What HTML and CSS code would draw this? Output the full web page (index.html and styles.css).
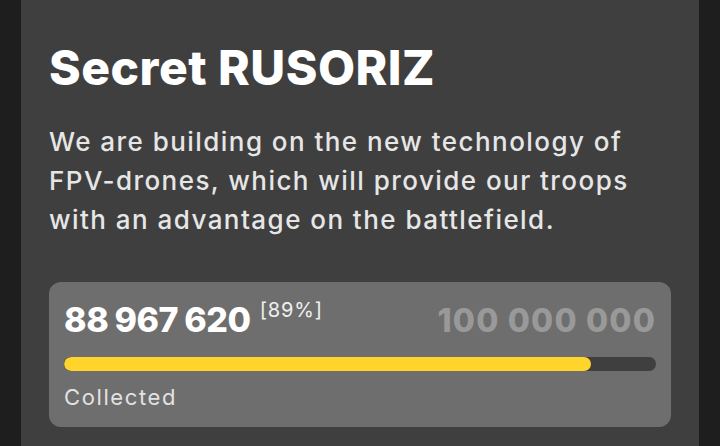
FILE: index.html
```html
<!DOCTYPE html>
<html lang="en">
<head>
<meta charset="utf-8">
<title>Secret RUSORIZ</title>
<link rel="stylesheet" href="styles.css">
</head>
<body>
<div class="page">
  <section class="panel">
    <h1 class="title">Secret RUSORIZ</h1>
    <p class="desc">We are building on the new technology of FPV-drones, which will provide our troops with an advantage on the battlefield.</p>
    <div class="card">
      <div class="row">
        <div class="collected">
          <span class="amount">88 967 620</span><span class="pct">[89%]</span>
        </div>
        <span class="goal">100 000 000</span>
      </div>
      <div class="track"><div class="fill" style="width: 89%"></div></div>
      <div class="label">Collected</div>
    </div>
  </section>
</div>
</body>
</html>
```

FILE: styles.css
```css
html, body {
  margin: 0;
  padding: 0;
  height: 100%;
}
body {
  background: #1e1e1e;
  font-family: Inter, "Noto Sans", "DejaVu Sans", sans-serif;
  overflow: hidden;
}
.page {
  padding: 0 21px;
  height: 100%;
}
.panel {
  background: #3f3f3f;
  height: 100%;
  box-sizing: border-box;
  padding: 39px 28px 0;
}
.title {
  margin: 0;
  color: #ffffff;
  font-size: 48px;
  line-height: 57.6px;
  font-weight: 800;
  letter-spacing: 0.5px;
}
.desc {
  margin: 25px 0 0;
  color: #e6e6e6;
  font-size: 26px;
  line-height: 39px;
  font-weight: 450;
  letter-spacing: 1.45px;
}
.card {
  margin-top: 43px;
  background: #6e6e6e;
  border-radius: 12px;
  padding: 18px 15px 17px;
}
.row {
  display: flex;
  justify-content: space-between;
  align-items: baseline;
}
.collected {
  display: flex;
  align-items: flex-start;
}
.amount {
  color: #ffffff;
  font-size: 34px;
  line-height: 40px;
  font-weight: 800;
  letter-spacing: -0.4px;
  word-spacing: -1px;
}
.pct {
  color: #f0f0f0;
  font-size: 20px;
  line-height: 20px;
  margin-left: 9px;
  letter-spacing: 0.8px;
}
.goal {
  color: #999999;
  font-size: 32px;
  line-height: 40px;
  font-weight: 800;
  letter-spacing: 1.2px;
}
.track {
  margin-top: 16px;
  height: 14px;
  border-radius: 7px;
  background: #3f3f3f;
  overflow: hidden;
}
.fill {
  height: 100%;
  background: #ffd42b;
  border-radius: 7px;
}
.label {
  margin-top: 13px;
  color: #e2e2e2;
  font-size: 22px;
  line-height: 26px;
  font-weight: 400;
  letter-spacing: 1.6px;
}
```
